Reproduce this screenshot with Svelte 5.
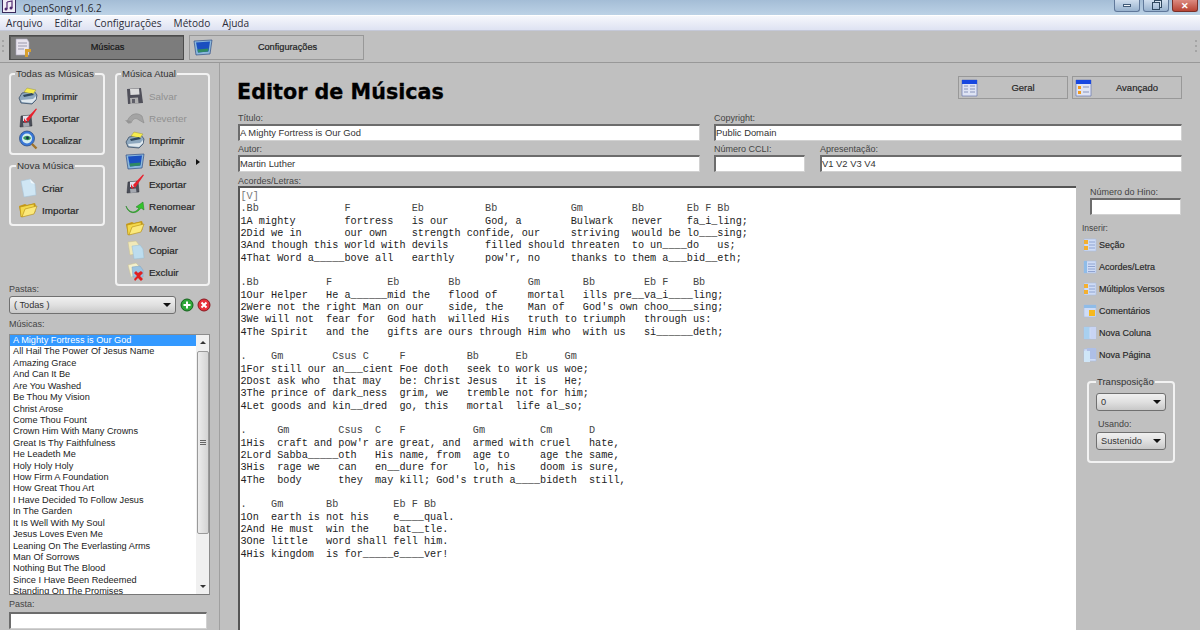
<script>
  const todas = [
    { icon: 'printer', label: 'Imprimir' },
    { icon: 'exportar', label: 'Exportar' },
    { icon: 'search', label: 'Localizar' }
  ];
  const nova = [
    { icon: 'doc', label: 'Criar' },
    { icon: 'folder', label: 'Importar' }
  ];
  const atual = [
    { icon: 'floppy', label: 'Salvar', off: true },
    { icon: 'revert', label: 'Reverter', off: true },
    { icon: 'printer', label: 'Imprimir' },
    { icon: 'monitor', label: 'Exibição', more: true },
    { icon: 'exportar', label: 'Exportar' },
    { icon: 'rename', label: 'Renomear' },
    { icon: 'folder', label: 'Mover' },
    { icon: 'copy', label: 'Copiar' },
    { icon: 'trash', label: 'Excluir' }
  ];
  const songs = [
    'A Mighty Fortress is Our God', 'All Hail The Power Of Jesus Name', 'Amazing Grace', 'And Can It Be',
    'Are You Washed', 'Be Thou My Vision', 'Christ Arose', 'Come Thou Fount', 'Crown Him With Many Crowns',
    'Great Is Thy Faithfulness', 'He Leadeth Me', 'Holy Holy Holy', 'How Firm A Foundation', 'How Great Thou Art',
    'I Have Decided To Follow Jesus', 'In The Garden', 'It Is Well With My Soul', 'Jesus Loves Even Me',
    'Leaning On The Everlasting Arms', 'Man Of Sorrows', 'Nothing But The Blood', 'Since I Have Been Redeemed',
    'Standing On The Promises'
  ];
  const inserir = [
    { kind: 'sec', label: 'Seção' },
    { kind: 'lines', label: 'Acordes/Letra' },
    { kind: 'sec', label: 'Múltiplos Versos' },
    { kind: 'note', label: 'Comentários' },
    { kind: 'cols', label: 'Nova Coluna' },
    { kind: 'page', label: 'Nova Página' }
  ];
  const lyrics = [
    '[V]',
    '.Bb              F          Eb          Bb            Gm        Bb       Eb F Bb',
    '1A mighty        fortress   is our      God, a        Bulwark   never    fa_i_ling;',
    '2Did we in       our own    strength confide, our     striving  would be lo___sing;',
    '3And though this world with devils      filled should threaten  to un____do   us;',
    '4That Word a_____bove all   earthly     pow\'r, no     thanks to them a___bid__eth;',
    ' ',
    '.Bb           F         Eb        Bb           Gm       Bb        Eb F    Bb',
    '1Our Helper   He a______mid the   flood of     mortal   ills pre__va_i____ling;',
    '2Were not the right Man on our    side, the    Man of   God\'s own choo____sing;',
    '3We will not  fear for  God hath  willed His   truth to triumph   through us:',
    '4The Spirit   and the   gifts are ours through Him who  with us   si______deth;',
    ' ',
    '.    Gm        Csus C     F          Bb      Eb      Gm',
    '1For still our an___cient Foe doth   seek to work us woe;',
    '2Dost ask who  that may   be: Christ Jesus   it is   He;',
    '3The prince of dark_ness  grim, we   tremble not for him;',
    '4Let goods and kin__dred  go, this   mortal  life al_so;',
    ' ',
    '.     Gm        Csus  C   F           Gm         Cm      D',
    '1His  craft and pow\'r are great, and  armed with cruel   hate,',
    '2Lord Sabba_____oth   His name, from  age to     age the same,',
    '3His  rage we   can   en__dure for    lo, his    doom is sure,',
    '4The  body      they  may kill; God\'s truth a____bideth  still,',
    ' ',
    '.    Gm       Bb         Eb F Bb',
    '1On  earth is not his    e____qual.',
    '2And He must  win the    bat__tle.',
    '3One little   word shall fell him.',
    '4His kingdom  is for_____e____ver!'
  ];

  function lineClass(l) {
    if (l[0] === '[') return 'tag';
    if (l[0] === '.') return 'chord';
    return '';
  }
</script>

{#snippet icon(name)}
  <svg class="ico" viewBox="0 0 20 20" width="20" height="20">
    {#if name === 'printer'}
      <path d="M1 12l3-5 12-2 3 4-1 5-4 4-11-1z" fill="#8ea8bf" stroke="#3c5068" stroke-width=".8"/>
      <path d="M6 6l3-4 9 2-3 4z" fill="#f6ec4e" stroke="#9a9440" stroke-width=".5"/>
      <path d="M3 14l12-1 3-3v3l-4 4-10-1z" fill="#dfe8ee"/>
      <path d="M5 9l9-2 2 2-10 2z" fill="#2f4860"/>
    {:else if name === 'exportar'}
      <path d="M3 8l10-1 1 11-12 1z" fill="#4a4d58" stroke="#2a2c34" stroke-width=".5"/>
      <path d="M5 8l6-.500v5l-6 .500z" fill="#e2e6f0"/>
      <path d="M5 15l6-.500.500 4-6 .500z" fill="#a4a8b0"/>
      <path d="M8 11l2 3L19 1l-1-.500z" fill="#e8202c"/>
      <path d="M6 10l3 5-3-1z" fill="#e8202c"/>
    {:else if name === 'search'}
      <circle cx="9" cy="8.500" r="7.500" fill="#3a78d8" stroke="#20447c" stroke-width=".7"/>
      <circle cx="9" cy="8.500" r="5" fill="#d6eef0"/>
      <path d="M5 8c2-3 6-3 8 0-1 3-6 3-8 0z" fill="#3c9a5c"/>
      <circle cx="9.500" cy="8" r="1.400" fill="#12304e"/>
      <path d="M14 14l4.500 4.500" stroke="#a0742c" stroke-width="2.400"/>
    {:else if name === 'doc'}
      <path d="M3 3l9-2 5 5 1 11-12 2z" fill="#cfe6f4" stroke="#a8c4d8" stroke-width=".6"/>
      <path d="M12 1l1 4 4 1z" fill="#f2f8fc"/>
    {:else if name === 'folder'}
      <path d="M1 6l6-2 2 1 8-2 1 3-15 11z" fill="#c79a18"/>
      <path d="M3 17L2 7l14-3 1 8z" fill="#f4d94a" stroke="#b18a12" stroke-width=".6"/>
      <path d="M4 17l3-8 12-3-3 8z" fill="#fbe97c" stroke="#b18a12" stroke-width=".6"/>
    {:else if name === 'floppy'}
      <path d="M2 3l14-1 2 15-15 1z" fill="#50505a"/>
      <path d="M5 3l9-.500.500 6-9 .500z" fill="#dcdcdc"/>
      <path d="M5 12l8-.500.500 6-8 .500z" fill="#b0b0b0"/>
      <path d="M7 13h3v4H7z" fill="#60606a"/>
    {:else if name === 'revert'}
      <path d="M2 14c2-7 9-11 15-6l2 7-5-3c-4-3-6-1-8 3z" fill="#a4a4a4" stroke="#8a8a8a" stroke-width=".6"/>
      <path d="M0 12l6 1-2 3z" fill="#949494"/>
    {:else if name === 'monitor'}
      <path d="M1 3l18-1-2 14-14 1z" fill="#8cb8dc" stroke="#1c3a78" stroke-width=".6"/>
      <path d="M3 4.500l14-1-1.500 10-10.500 1z" fill="#1a4fc0"/>
      <path d="M4.500 11.500l11-1-.500 3-10 1z" fill="#2f8a62"/>
    {:else if name === 'rename'}
      <path d="M1 10c3 7 9 8 13 2l-3-1 7-5 1 8-3-2c-5 7-13 6-15-2z" fill="#33c42c" stroke="#1c7a1c" stroke-width=".5"/>
    {:else if name === 'copy'}
      <path d="M3 2l8-1 3 4 1 8-10 2z" fill="#f1e9b8" stroke="#c8c090" stroke-width=".5"/>
      <path d="M7 6l8-1 3 4 1 9-10 1z" fill="#bcdcee" stroke="#98bcd0" stroke-width=".5"/>
    {:else if name === 'trash'}
      <path d="M3 3l8-2 4 4v8l-9 2z" fill="#f4f0cc" stroke="#c8c090" stroke-width=".5"/>
      <path d="M7 5l8-1 3 4v7H8z" fill="#9cc4e2" stroke="#7aa0c0" stroke-width=".5"/>
      <path d="M9 11l2-2 2 2 3-2 2 2-3 3 3 3-2 2-3-3-3 3-1-2 3-3z" fill="#e02020"/>
    {/if}
  </svg>
{/snippet}

{#snippet mini(kind)}
  <svg class="mini" viewBox="0 0 14 14" width="14" height="14">
    <path d="M1 1h12v12H1z" fill="#cfdcf6" stroke="#a8bce0" stroke-width=".6"/>
    {#if kind === 'sec'}
      <path d="M1 2h4v4H1zM1 8h4v4H1z" fill="#f4b030"/>
      <path d="M6 4h6M6 7h6M6 10h6" stroke="#7f94c8" stroke-width=".8"/>
    {:else if kind === 'lines'}
      <path d="M1 1h3v12H1z" fill="#8fbce8"/>
      <path d="M5 4h7M5 6.500h7M5 9h7M5 11.500h7" stroke="#7f94c8" stroke-width=".8"/>
    {:else if kind === 'note'}
      <path d="M1 1h12v3H1z" fill="#8fbce8"/>
      <path d="M6 6h6v6H6z" fill="#f5b820"/>
    {:else if kind === 'cols'}
      <path d="M1 1h5.500v12H1z" fill="#a8d0f0"/>
      <path d="M7.500 1H13v12H7.500z" fill="#c8d4f4"/>
    {:else}
      <path d="M4 0h9v11H4z" fill="#aebfe6"/>
      <path d="M1 3h6v11H1z" fill="#cfe6f8"/>
    {/if}
  </svg>
{/snippet}

{#snippet win(kind)}
  <svg class="winicon" viewBox="0 0 18 18" width="18" height="18">
    <path d="M1 1h15v16H1z" fill="#dfe4f4" stroke="#6a78b0" stroke-width=".7"/>
    <path d="M1 1h15v4H1z" fill="#1747e0"/>
    {#if kind === 'geral'}
      <path d="M3 7h4M9 7h5M3 10h4M9 10h5M3 13h4M9 13h5" stroke="#8894bc"/>
    {:else}
      <path d="M3 7h3v3H3zM3 12h3v3H3z" fill="#f09a20"/>
      <path d="M8 8h6M8 13h6" stroke="#8894bc"/>
    {/if}
  </svg>
{/snippet}

{#snippet tool(item)}
  <div class="tool" class:off={item.off}>
    {@render icon(item.icon)}
    <span>{item.label}</span>
    {#if item.more}<i class="more"></i>{/if}
  </div>
{/snippet}

<div class="app">
  <header class="titlebar">
    <svg class="appicon" viewBox="0 0 14 14" width="14" height="14">
      <path d="M0 0h14v14H0z" fill="#3a2a5c"/>
      <path d="M1 1h12v12H1z" fill="#f2eef6"/>
      <path d="M5 3l5-1v7M5 3v7" stroke="#502a70" fill="none" stroke-width="1.200"/>
      <circle cx="4" cy="10" r="1.500" fill="#502a70"/>
      <circle cx="9" cy="9" r="1.500" fill="#502a70"/>
    </svg>
    <span class="apptitle">OpenSong v1.6.2</span>
    <div class="winbtns">
      <div class="wb"><i class="wmin"></i></div>
      <div class="wb"><i class="wres"></i></div>
      <div class="wb close">✕</div>
    </div>
  </header>

  <nav class="menubar">
    <span>Arquivo</span><span>Editar</span><span>Configurações</span><span>Método</span><span>Ajuda</span>
  </nav>

  <div class="toolbar">
    <i class="grip"></i>
    <div class="tab active">
      <svg class="tabicon" viewBox="0 0 20 20" width="20" height="20">
        <path d="M3 1h11l2 3v13H3z" fill="#e8e4ee" stroke="#a8a4b8" stroke-width=".6"/>
        <path d="M5 5h9M5 8h9M5 11h6" stroke="#9a98ac"/>
        <path d="M12 11h6v3h-3v5h-3z" fill="#d8a030"/>
      </svg>
      <span>Músicas</span>
    </div>
    <div class="tab">
      <svg class="tabicon" viewBox="0 0 20 20" width="20" height="20">
        <path d="M1 3l18-1-2 14-14 1z" fill="#8cb8dc" stroke="#1c3a78" stroke-width=".6"/>
        <path d="M3 4.500l14-1-1.500 10-10.500 1z" fill="#1a4fc0"/>
        <path d="M4.500 11.500l11-1-.500 3-10 1z" fill="#2f8a62"/>
      </svg>
      <span>Configurações</span>
    </div>
    <i class="grip right"></i>
  </div>

  <div class="body">
    <aside class="sidebar">
      <div class="groups">
        <div class="groupcol">
          <fieldset class="todas">
            <legend>Todas as Músicas</legend>
            {#each todas as item}{@render tool(item)}{/each}
          </fieldset>
          <fieldset class="nova">
            <legend>Nova Música</legend>
            {#each nova as item}{@render tool(item)}{/each}
          </fieldset>
        </div>
        <fieldset class="atual">
          <legend>Música Atual</legend>
          {#each atual as item}{@render tool(item)}{/each}
        </fieldset>
      </div>

      <div class="lbl pastas">Pastas:</div>
      <div class="folderrow">
        <div class="select wide">( Todas )<i class="caret"></i></div>
        <svg viewBox="0 0 14 14" width="14" height="14">
          <circle cx="7" cy="7" r="6" fill="#2ea838" stroke="#14601c"/>
          <path d="M7 3.500v7M3.500 7h7" stroke="#fff" stroke-width="2"/>
        </svg>
        <svg viewBox="0 0 14 14" width="14" height="14">
          <circle cx="7" cy="7" r="6" fill="#e8303a" stroke="#8a1820"/>
          <path d="M4.500 4.500l5 5M9.500 4.500l-5 5" stroke="#fff" stroke-width="2"/>
        </svg>
      </div>

      <div class="lbl musicas">Músicas:</div>
      <div class="list">
        <div class="rows">
          {#each songs as song, i}
            <div class="song" class:sel={i === 0}>{song}</div>
          {/each}
        </div>
        <div class="scroll">
          <i class="arrow up"></i>
          <div class="thumb"><i></i></div>
          <i class="arrow down"></i>
        </div>
      </div>

      <div class="lbl pasta">Pasta:</div>
      <div class="input pastainput"></div>
    </aside>

    <main class="main">
      <div class="head">
        <h1>Editor de Músicas</h1>
        <div class="headbtns">
          <div class="hbtn">{@render win('geral')}<span>Geral</span></div>
          <div class="hbtn">{@render win('avancado')}<span>Avançado</span></div>
        </div>
      </div>

      <div class="fields">
        <div class="field">
          <div class="lbl">Título:</div>
          <div class="input">A Mighty Fortress is Our God</div>
        </div>
        <div class="field">
          <div class="lbl">Copyright:</div>
          <div class="input">Public Domain</div>
        </div>
        <div class="field">
          <div class="lbl">Autor:</div>
          <div class="input">Martin Luther</div>
        </div>
        <div class="field split">
          <div class="ccli">
            <div class="lbl">Número CCLI:</div>
            <div class="input"></div>
          </div>
          <div class="apres">
            <div class="lbl">Apresentação:</div>
            <div class="input">V1 V2 V3 V4</div>
          </div>
        </div>
      </div>

      <div class="editor">
        <div class="lyricscol">
          <div class="lbl">Acordes/Letras:</div>
          <div class="lyrics">
            {#each lyrics as line}
              <div class="line {lineClass(line)}">{line}</div>
            {/each}
          </div>
        </div>

        <div class="rightcol">
          <div class="hino">
            <div class="lbl">Número do Hino:</div>
            <div class="input"></div>
          </div>
          <div class="lbl inserir">Inserir:</div>
          {#each inserir as item}
            <div class="ins">{@render mini(item.kind)}<span>{item.label}</span></div>
          {/each}
          <fieldset class="transp">
            <legend>Transposição</legend>
            <div class="select">0<i class="caret"></i></div>
            <div class="lbl usando">Usando:</div>
            <div class="select">Sustenido<i class="caret"></i></div>
          </fieldset>
        </div>
      </div>
    </main>
  </div>
</div>

<style>
  :global(body) {
    margin: 0;
    background: #c0c0c0;
  }
  .app {
    width: 1200px;
    height: 630px;
    overflow: hidden;
    display: flex;
    flex-direction: column;
    background: #c0c0c0;
    font-family: "Liberation Sans", Arial, sans-serif;
    font-size: 9.5px;
    color: #222;
  }

  .titlebar {
    height: 15px;
    flex-shrink: 0;
    display: flex;
    align-items: center;
    background: linear-gradient(#a4bdd6, #bcd2e6);
  }
  .appicon {
    margin: -4px 0 0 2px;
  }
  .apptitle {
    margin-left: 7px;
    font-family: "Open Sans", sans-serif;
    font-size: 10px;
    color: #2a2a30;
  }
  .winbtns {
    margin-left: auto;
    margin-right: 2px;
    display: flex;
    gap: 3px;
    align-self: flex-start;
  }
  .wb {
    width: 26px;
    height: 12px;
    display: flex;
    align-items: center;
    justify-content: center;
    border: 1px solid #60789a;
    border-top: 0;
    border-radius: 0 0 3px 3px;
    box-sizing: border-box;
    background: linear-gradient(#d0deee, #98b2ce);
  }
  .wb.close {
    background: linear-gradient(#dc8a80, #b84434);
    border-color: #7a3028;
    color: #fff;
    font-size: 9px;
    font-weight: bold;
  }
  .wmin {
    width: 8px;
    height: 3px;
    background: #f0f4f8;
    border: 1px solid #405a78;
    box-sizing: border-box;
  }
  .wres {
    width: 8px;
    height: 8px;
    border: 1px solid #304860;
    box-sizing: border-box;
    box-shadow: 2px -2px 0 -1px #d8e4f0, 2px -2px 0 0 #304860;
  }

  .menubar {
    height: 16px;
    box-sizing: border-box;
    flex-shrink: 0;
    display: flex;
    gap: 12px;
    align-items: center;
    padding-left: 6px;
    border-top: 1px solid #fff;
    background: linear-gradient(#f6f7fc, #dee2f2);
    border-bottom: 1px solid #c4c8d8;
    font-family: "Open Sans", sans-serif;
    font-size: 10.1px;
    color: #2c2c38;
  }

  .toolbar {
    height: 30px;
    padding-top: 1px;
    flex-shrink: 0;
    display: flex;
    align-items: center;
    gap: 5px;
    padding-left: 9px;
    position: relative;
    border-bottom: 1px solid #989898;
  }
  .grip {
    position: absolute;
    left: 2px;
    top: 9px;
    width: 2px;
    height: 12px;
    background: repeating-linear-gradient(#a4a4a4 0 2px, transparent 2px 5px);
  }
  .grip.right {
    left: auto;
    right: 3px;
  }
  .tab {
    width: 175px;
    height: 25px;
    box-sizing: border-box;
    border: 1px solid #989898;
    position: relative;
    display: flex;
    align-items: center;
    justify-content: center;
    padding-left: 22px;
    font-size: 9.2px;
    -webkit-text-stroke: 0.2px #222;
  }
  .tab.active {
    background: #7c7c7c;
    border-color: #4c4c4c;
    box-shadow: inset 1px 1px 0 #5c5c5c;
    color: #111;
  }
  .tabicon {
    position: absolute;
    left: 3px;
    top: 2px;
  }

  .body {
    flex: 1;
    display: flex;
    min-height: 0;
  }
  .sidebar {
    width: 220px;
    flex-shrink: 0;
    box-sizing: border-box;
    padding: 5px 0 0 9px;
    border-right: 1px solid #a0a0a0;
  }
  .groups {
    display: flex;
    gap: 10px;
  }
  .groupcol {
    display: flex;
    flex-direction: column;
    gap: 5px;
  }
  fieldset {
    margin: 0;
    padding: 0;
    min-width: 0;
    box-sizing: border-box;
    border: 2px solid #f2f2f2;
    border-radius: 4px;
  }
  legend {
    padding: 0 1px;
    font-size: 9.8px;
    line-height: 12px;
    color: #333;
    white-space: nowrap;
  }
  .todas {
    width: 96px;
    height: 87px;
    padding: 5px 0 0 7px;
  }
  .todas legend {
    margin-left: -3px;
  }
  .nova {
    width: 96px;
    height: 66px;
    padding: 5px 0 0 7px;
  }
  .nova legend {
    margin-left: -2px;
  }
  .atual {
    width: 95px;
    height: 218px;
    padding: 5px 0 0 8px;
  }
  .atual legend {
    margin-left: -4px;
    font-size: 9.5px;
  }
  .tool {
    height: 22px;
    display: flex;
    align-items: center;
    gap: 4px;
    font-size: 9.9px;
    color: #1c1c1c;
    -webkit-text-stroke: 0.2px #333;
  }
  .tool.off {
    color: #909090;
    -webkit-text-stroke: 0;
  }
  .more {
    margin-left: 6px;
    border-left: 4px solid #111;
    border-top: 3px solid transparent;
    border-bottom: 3px solid transparent;
  }
  .lbl {
    font-size: 9px;
    line-height: 10px;
    color: #444;
  }
  .pastas {
    margin-top: -2px;
  }
  .folderrow {
    margin-top: 2px;
    display: flex;
    align-items: center;
    gap: 3px;
  }
  .select {
    height: 18px;
    box-sizing: border-box;
    display: flex;
    align-items: center;
    justify-content: space-between;
    padding: 0 4px;
    border: 1px solid #707070;
    border-radius: 3px;
    background: linear-gradient(#f0f0f0 0, #e0e0e0 50%, #c8c8c8 100%);
    font-size: 9.2px;
    color: #333;
  }
  .select.wide {
    width: 167px;
    margin-right: 1px;
  }
  .caret {
    border-top: 4px solid #111;
    border-left: 4px solid transparent;
    border-right: 4px solid transparent;
  }
  .musicas {
    margin-top: 5px;
  }
  .list {
    margin-top: 5px;
    width: 201px;
    height: 261px;
    box-sizing: border-box;
    display: flex;
    background: #fff;
    border: 1px solid #8c8c8c;
    border-bottom-color: #777;
    overflow: hidden;
  }
  .rows {
    flex: 1;
    min-width: 0;
  }
  .song {
    height: 11.43px;
    line-height: 11.43px;
    padding-left: 3px;
    font-size: 9.2px;
    white-space: nowrap;
    color: #222;
  }
  .song.sel {
    background: #3399ff;
    color: #fff;
  }
  .scroll {
    width: 13px;
    flex-shrink: 0;
    display: flex;
    flex-direction: column;
    align-items: center;
    background: #f0f0f0;
  }
  .arrow {
    border-left: 3px solid transparent;
    border-right: 3px solid transparent;
    margin: 6px 0;
  }
  .arrow.up {
    border-bottom: 3px solid #333;
  }
  .arrow.down {
    border-top: 3px solid #333;
    margin-top: auto;
  }
  .thumb {
    width: 12px;
    height: 183px;
    margin-top: 1px;
    box-sizing: border-box;
    border: 1px solid #9a9a9a;
    border-radius: 2px;
    background: linear-gradient(90deg, #ececec, #d4d4d4);
    display: flex;
    align-items: center;
    justify-content: center;
  }
  .thumb i {
    width: 6px;
    height: 5px;
    background: repeating-linear-gradient(#666 0 1px, transparent 1px 2px);
  }
  .pasta {
    margin-top: 4px;
  }
  .input {
    height: 17px;
    box-sizing: border-box;
    border: 1px solid #d2d2d2;
    border-top: 2px solid #6c6c6c;
    border-left: 2px solid #6c6c6c;
    background: #fff;
    font-size: 9.4px;
    line-height: 14px;
    color: #333;
    white-space: nowrap;
    overflow: hidden;
  }
  .pastainput {
    width: 198px;
    margin-top: 3px;
  }

  .main {
    flex: 1;
    min-width: 0;
    padding: 0 18px 0 18px;
    display: flex;
    flex-direction: column;
  }
  .head {
    height: 51px;
    flex-shrink: 0;
    display: flex;
    justify-content: space-between;
    box-sizing: border-box;
    padding-top: 13px;
  }
  h1 {
    margin: 3px 0 0 -1px;
    font-family: "DejaVu Sans", sans-serif;
    font-size: 20.7px;
    line-height: 26px;
    font-weight: bold;
    color: #000;
    -webkit-text-stroke: 0.3px #000;
  }
  .headbtns {
    display: flex;
    gap: 4px;
  }
  .hbtn {
    width: 110px;
    height: 23px;
    box-sizing: border-box;
    border: 1px solid #989898;
    position: relative;
    display: flex;
    align-items: center;
    justify-content: center;
    padding-left: 20px;
    -webkit-text-stroke: 0.2px #333;
  }
  .winicon {
    position: absolute;
    left: 2px;
    top: 2px;
  }
  .fields {
    display: grid;
    grid-template-columns: 462px 468px;
    column-gap: 14px;
    row-gap: 4px;
    flex-shrink: 0;
  }
  .field .lbl {
    height: 9px;
    line-height: 9px;
    margin-bottom: 1px;
    white-space: nowrap;
  }
  .split {
    display: flex;
    gap: 15px;
  }
  .ccli {
    width: 91px;
  }
  .apres {
    flex: 1;
  }
  .editor {
    flex: 1;
    min-height: 0;
    display: flex;
    margin-top: 4px;
  }
  .lyricscol {
    width: 838px;
    flex-shrink: 0;
  }
  .lyricscol .lbl {
    height: 10px;
    line-height: 10px;
  }
  .lyrics {
    height: 460px;
    box-sizing: border-box;
    padding: 3px 0 0 0.5px;
    background: #fff;
    border-top: 2px solid #555;
    border-left: 2px solid #555;
    font-family: "Liberation Mono", "Courier New", monospace;
    font-size: 10.2px;
    color: #222;
    white-space: pre;
  }
  .line {
    height: 12.33px;
    line-height: 12.33px;
  }
  .line.tag {
    color: #777;
  }
  .line.chord {
    color: #444;
  }

  .rightcol {
    flex: 1;
    padding: 0 0 0 6px;
  }
  .hino {
    margin: 11px 0 0 8px;
  }
  .hino .lbl {
    margin-bottom: 1px;
  }
  .hino .input {
    width: 91px;
  }
  .inserir {
    margin-top: 8px;
    margin-bottom: 1px;
    font-size: 8.5px;
  }
  .ins {
    height: 22px;
    display: flex;
    align-items: center;
    gap: 2px;
    padding-left: 1px;
    font-size: 9px;
    -webkit-text-stroke: 0.15px #333;
    white-space: nowrap;
  }
  .transp {
    width: 88px;
    height: 87px;
    margin: 10px 0 0 5px;
    padding: 5px 7px 0 7px;
  }
  .transp legend {
    font-size: 9.5px;
  }
  .usando {
    margin: 8px 0 3px 2px;
  }
</style>
